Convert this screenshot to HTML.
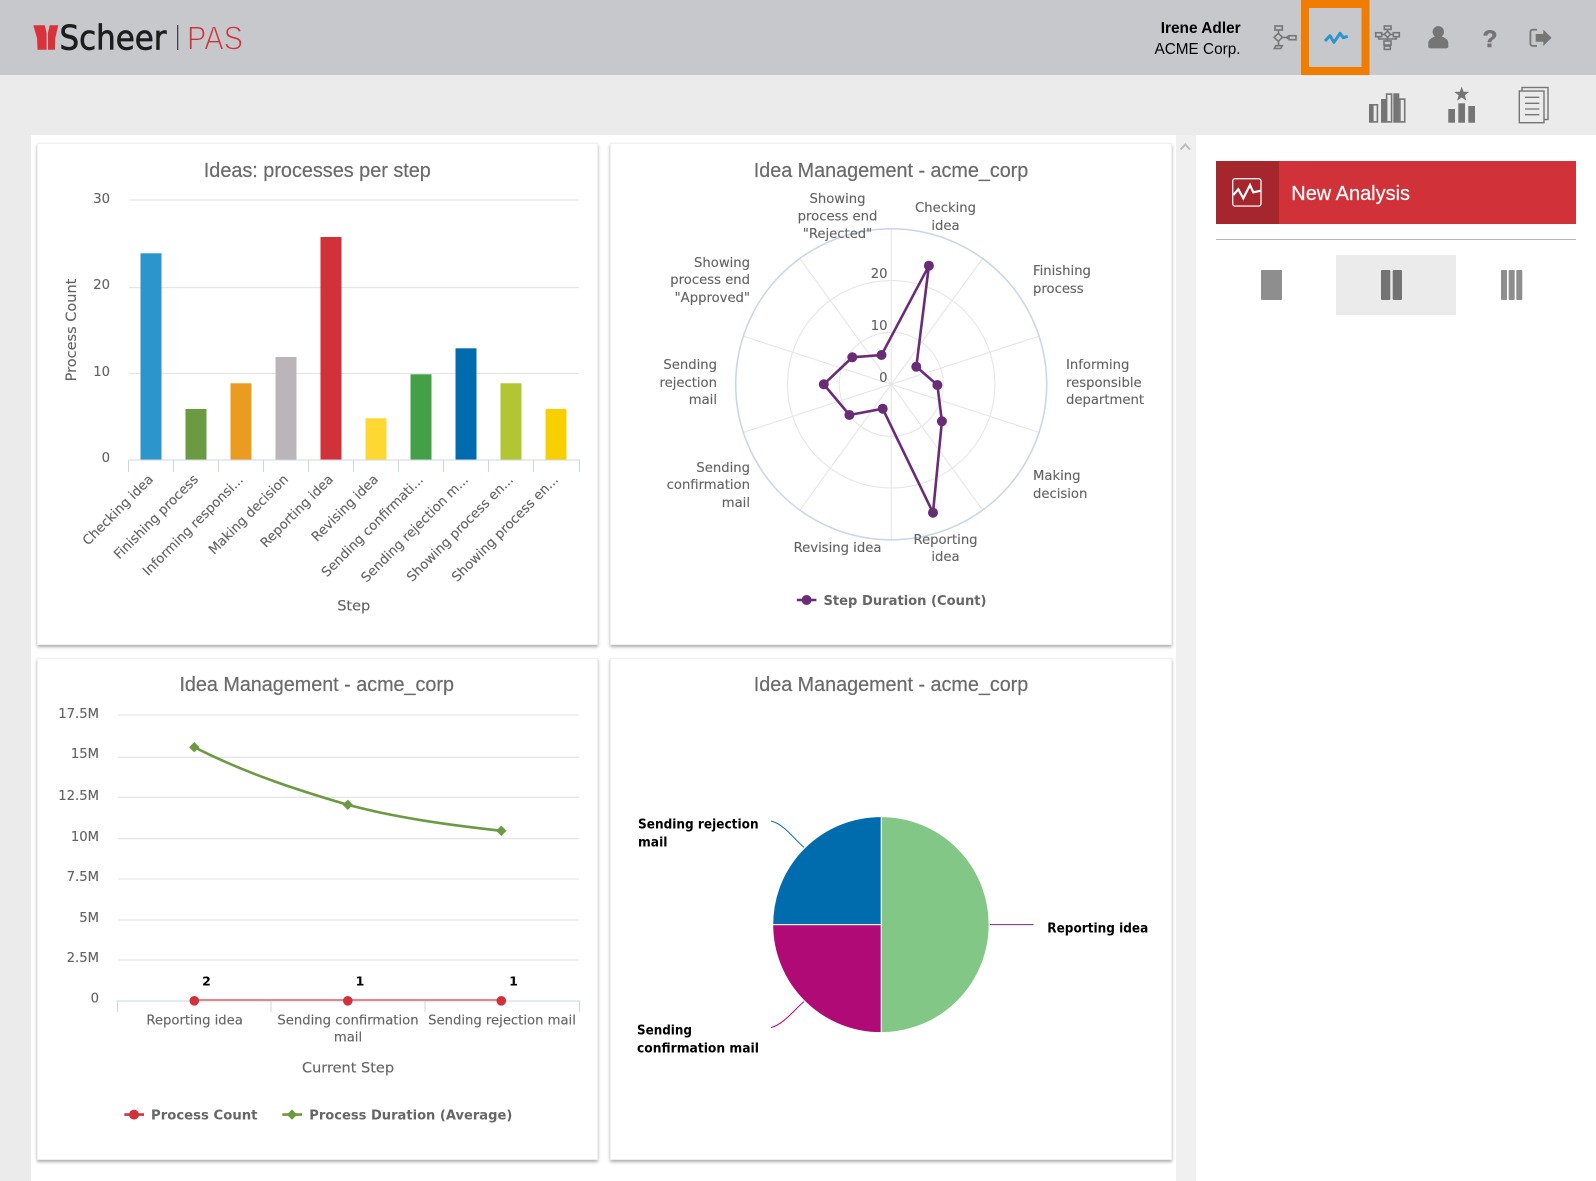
<!DOCTYPE html>
<html lang="en">
<head>
<meta charset="utf-8">
<title>Scheer PAS</title>
<style>
html,body{margin:0;padding:0;background:#ebebeb;width:1596px;height:1181px;overflow:hidden}
.abs{position:absolute}
.card{position:absolute;background:#fff;border:1px solid #f0f0f0;box-sizing:border-box;box-shadow:0 2px 3px rgba(0,0,0,.32)}
svg{position:absolute;left:0;top:0}
.t{font-family:"Liberation Sans",sans-serif;font-size:20px;fill:#6a6a6a;stroke:#6a6a6a;stroke-width:.2;text-anchor:middle}
.a{font-family:"DejaVu Sans",sans-serif;font-size:13.2px;fill:#626262;stroke:#626262;stroke-width:.12}
.at{font-size:14.5px}
.m{text-anchor:middle}
.e{text-anchor:end}
.b{font-family:"DejaVu Sans",sans-serif;font-weight:bold;font-size:13px;fill:#666}
.p{font-family:"DejaVu Sans",sans-serif;font-weight:bold;font-size:13px;fill:#000}
.g{stroke:#e6e6e6;stroke-width:1.3;fill:none}
.x{stroke:#ccd6eb;stroke-width:1;fill:none}
.i{stroke:#757575;stroke-width:1.6;fill:none}
</style>
</head>
<body>
<div class="abs" style="left:0;top:0;width:1596px;height:75px;background:#c6c8cc"></div>
<div class="abs" style="left:31px;top:135px;width:1145px;height:1046px;background:#fff"></div>
<div class="abs" style="left:1176px;top:135px;width:20px;height:1046px;background:#f0f0f0"></div>
<div class="abs" style="left:1196px;top:135px;width:400px;height:1046px;background:#fff"></div>
<div class="card" style="left:37px;top:143px;width:561px;height:502px"></div>
<div class="card" style="left:610px;top:143px;width:562px;height:502px"></div>
<div class="card" style="left:37px;top:658px;width:561px;height:502px"></div>
<div class="card" style="left:610px;top:658px;width:562px;height:502px"></div>

<svg width="1596" height="1181" viewBox="0 0 1596 1181" xmlns="http://www.w3.org/2000/svg">
<!-- logo -->
<polygon fill="#d8333a" points="33.3,25.3 44.8,25.3 46.6,33 46.6,49.7 37.5,49.7 37,38"/>
<polygon fill="#d8333a" points="58.3,25.3 49.7,25.3 47.9,33 47.9,49.7 55,49.7 55.3,38"/>
<text x="59.5" y="49.3" textLength="107" lengthAdjust="spacingAndGlyphs" style="font-family:'DejaVu Sans',sans-serif;font-size:34px;fill:#1d1d1d;stroke:#1d1d1d;stroke-width:.7">Scheer</text>
<rect x="177" y="25" width="1.3" height="25" fill="#444"/>
<text x="187" y="49.5" textLength="56" lengthAdjust="spacingAndGlyphs" style="font-family:'Liberation Sans',sans-serif;font-size:33px;fill:#d13239;stroke:#c6c8cc;stroke-width:1.1">PAS</text>

<!-- user -->
<text x="1240.7" y="33" class="e" textLength="80" lengthAdjust="spacingAndGlyphs" style="font-family:'Liberation Sans',sans-serif;font-weight:bold;font-size:16px;fill:#000">Irene Adler</text>
<text x="1240.5" y="54" class="e" textLength="86" lengthAdjust="spacingAndGlyphs" style="font-family:'Liberation Sans',sans-serif;font-size:16px;fill:#000">ACME Corp.</text>

<!-- orange box -->
<rect x="1305" y="4" width="60.5" height="67" fill="none" stroke="#f07d00" stroke-width="8"/>

<!-- icon 1 -->
<g class="i">
<rect x="1275" y="26" width="7.3" height="4"/>
<path d="M1278.5,30V33.3M1278.3,33.3l4.2,4-4.2,4-4.2-4zM1278.5,41.3V45.7M1282.5,37.5H1289"/>
<rect x="1289" y="35.7" width="7" height="4"/>
<path d="M1275.8,45.7H1282.3L1280.8,48.5H1274.3Z"/>
</g>
<path d="M1285,37.5l3,-2v4z" fill="#757575"/>
<!-- activity -->
<polyline points="1325,41 1330,35.7 1334,42.3 1340,33.3 1343.3,37.7 1347.7,36.3" fill="none" stroke="#2b95cc" stroke-width="3" stroke-linejoin="round"/>
<!-- icon 3 -->
<g class="i">
<rect x="1384.3" y="26" width="6.7" height="3.4"/>
<path d="M1387.5,29.4V31.5M1387.5,31.3l3.2,3-3.2,3-3.2-3zM1381.7,34.5H1384.3M1390.7,34.5H1393.3"/>
<rect x="1375.7" y="32.7" width="6" height="4"/>
<rect x="1393.3" y="32.7" width="6" height="4"/>
<path d="M1378.7,36.7V39H1396.3V36.7M1387.5,37.3V41"/>
<rect x="1384" y="41" width="7" height="4"/>
<rect x="1384.3" y="46" width="6" height="3.4"/>
</g>
<!-- person -->
<circle cx="1438.3" cy="31.8" r="5.7" fill="#757575"/>
<path d="M1428.3,46.5V43C1428.3,39.5 1432,37.5 1435,36.5H1441.6C1444.6,37.5 1448.3,39.5 1448.3,43V46.5C1448.3,47.8 1447,48.4 1446,48.4H1430.6C1429.6,48.4 1428.3,47.8 1428.3,46.5Z" fill="#757575"/>
<!-- question -->
<text x="1490" y="46.8" class="m" style="font-family:'Liberation Sans',sans-serif;font-weight:bold;font-size:24.5px;fill:#757575;stroke:#757575;stroke-width:.6">?</text>
<!-- exit -->
<path d="M1537,29.7H1533C1531.3,29.7 1530.4,30.7 1530.4,32V43.5C1530.4,44.8 1531.3,45.9 1533,45.9H1537" fill="none" stroke="#7a7a7a" stroke-width="1.9"/>
<path d="M1535.7,34H1543.3V29.6L1551.5,37.8L1543.3,46V41.7H1535.7Z" fill="#757575"/>

<!-- toolbar: bars -->
<rect x="1369" y="104" width="3.8" height="18.7" fill="#757575"/>
<rect x="1372.8" y="104.8" width="4.6" height="17.1" fill="none" stroke="#757575" stroke-width="1.6"/>
<rect x="1381" y="99" width="5" height="23.7" fill="#757575"/>
<rect x="1386.6" y="94.1" width="5" height="27.8" fill="none" stroke="#757575" stroke-width="1.6"/>
<rect x="1393.3" y="93.3" width="6" height="29.4" fill="#757575"/>
<rect x="1399.9" y="99.1" width="4.8" height="22.8" fill="none" stroke="#757575" stroke-width="1.6"/>
<!-- star bars -->
<polygon fill="#757575" points="1461.7,86.5 1463.6,91.8 1469.2,91.9 1464.8,95.3 1466.4,100.7 1461.7,97.5 1457,100.7 1458.6,95.3 1454.2,91.9 1459.8,91.8"/>
<rect x="1448.3" y="109" width="6.7" height="13.7" fill="#757575"/>
<rect x="1458.3" y="103.3" width="6.7" height="19.4" fill="#757575"/>
<rect x="1468.3" y="106" width="6.7" height="16.7" fill="#757575"/>
<!-- docs -->
<rect x="1522" y="87.5" width="26" height="32" fill="#ebebeb" stroke="#757575" stroke-width="1.4"/>
<rect x="1519.3" y="91" width="24.7" height="31.7" fill="#ebebeb" stroke="#757575" stroke-width="1.4"/>
<path d="M1525,97.3H1539.3M1525,103.3H1539.3M1525,109H1539.3M1525,114.7H1539.3" stroke="#757575" stroke-width="1.3" fill="none"/>

<!-- scroll chevron -->
<path d="M1180.5,149.5L1185.3,144.5L1190,149.5" fill="none" stroke="#bdbdbd" stroke-width="2"/>

<!-- right panel -->
<rect x="1216" y="161" width="360" height="63" fill="#d13239"/>
<rect x="1216" y="161" width="63" height="63" fill="#a5262c"/>
<rect x="1232.7" y="178.7" width="28.3" height="27.4" rx="2.5" fill="none" stroke="#f5eaea" stroke-width="1.4"/>
<polyline points="1233.3,195 1238.3,189.3 1243.3,198.3 1250,185 1253.3,192.3 1260.7,190.7" fill="none" stroke="#fff" stroke-width="2.2"/>
<text x="1291.3" y="200" textLength="118.7" lengthAdjust="spacingAndGlyphs" style="font-family:'Liberation Sans',sans-serif;font-size:20px;fill:#fff;stroke:#fff;stroke-width:.2">New Analysis</text>
<rect x="1216" y="239" width="360" height="1" fill="#b5b5b5"/>
<rect x="1336" y="255" width="120" height="60" fill="#ebebeb"/>
<rect x="1261" y="270" width="21" height="30" rx="1" fill="#8e8e8e"/>
<rect x="1381" y="270" width="9.3" height="30" rx="1" fill="#737373"/>
<rect x="1392.7" y="270" width="9.3" height="30" rx="1" fill="#737373"/>
<rect x="1501" y="270" width="6" height="30" rx="1" fill="#8e8e8e"/>
<rect x="1508.7" y="270" width="6" height="30" rx="1" fill="#8e8e8e"/>
<rect x="1516.3" y="270" width="6" height="30" rx="1" fill="#8e8e8e"/>

<!-- ===== CARD 1 ===== -->
<text class="t" x="317.3" y="177" textLength="227" lengthAdjust="spacingAndGlyphs">Ideas: processes per step</text>
<path class="g" d="M129,200H579M129,287.5H579M129,373.5H579"/>
<g class="a e">
<text x="110" y="203">30</text>
<text x="110" y="289">20</text>
<text x="110" y="376">10</text>
<text x="110" y="462">0</text>
</g>
<text class="a at m" transform="translate(76,330) rotate(-90)">Process Count</text>
<rect x="140.5" y="253.3" width="21" height="206.4" fill="#2b95cc"/>
<rect x="185.5" y="409" width="21" height="50.7" fill="#6b9a42"/>
<rect x="230.5" y="383.3" width="21" height="76.4" fill="#e99c20"/>
<rect x="275.5" y="357" width="21" height="102.7" fill="#b9b5b8"/>
<rect x="320.5" y="237" width="21" height="222.7" fill="#d13239"/>
<rect x="365.5" y="418.3" width="21" height="41.4" fill="#ffd733"/>
<rect x="410.5" y="374.3" width="21" height="85.4" fill="#44a047"/>
<rect x="455.5" y="348.3" width="21" height="111.4" fill="#006cad"/>
<rect x="500.5" y="383.3" width="21" height="76.4" fill="#b2c532"/>
<rect x="545.5" y="409" width="21" height="50.7" fill="#f8cf00"/>
<path class="x" d="M129,460H580M128.5,460V472M173.5,460V472M218.5,460V472M263.5,460V472M308.5,460V472M353.5,460V472M398.5,460V472M443.5,460V472M488.5,460V472M533.5,460V472M579.5,460V472" stroke-width="1.2"/>
<g class="a e">
<text transform="translate(154,480) rotate(-45)">Checking idea</text>
<text transform="translate(199,480) rotate(-45)">Finishing process</text>
<text transform="translate(244,480.5) rotate(-45)">Informing responsi...</text>
<text transform="translate(289,480) rotate(-45)">Making decision</text>
<text transform="translate(334,480) rotate(-45)">Reporting idea</text>
<text transform="translate(379,480) rotate(-45)">Revising idea</text>
<text transform="translate(424,480.5) rotate(-45)">Sending confirmati...</text>
<text transform="translate(469,480.5) rotate(-45)">Sending rejection m...</text>
<text transform="translate(514,480.5) rotate(-45)">Showing process en...</text>
<text transform="translate(559,480.5) rotate(-45)">Showing process en...</text>
</g>
<text class="a at m" x="353.7" y="610.5">Step</text>

<!-- ===== CARD 2 radar ===== -->
<text class="t" x="891" y="177" textLength="274.5" lengthAdjust="spacingAndGlyphs">Idea Management - acme_corp</text>
<g class="g" style="stroke-width:1.1">
<circle cx="891.2" cy="384.3" r="52"/>
<circle cx="891.2" cy="384.3" r="103.7"/>
<path d="M891.2,384.3V228.8M891.2,384.3L982.6,258.5M891.2,384.3L1039.1,336.2M891.2,384.3L1039.1,432.4M891.2,384.3L982.6,510.1M891.2,384.3V539.8M891.2,384.3L799.8,510.1M891.2,384.3L743.3,432.4M891.2,384.3L743.3,336.2M891.2,384.3L799.8,258.5"/>
</g>
<circle cx="891.2" cy="384.3" r="155.5" fill="none" stroke="#ccd6eb" stroke-width="1.6"/>
<g class="a e">
<text x="887.5" y="278">20</text>
<text x="887.5" y="330">10</text>
<text x="887.5" y="382">0</text>
</g>
<polygon points="928.9,265.7 916.3,366.7 937.4,385 941.9,421.3 933,512.7 882.7,408.7 849.4,415 823.8,384.3 852.3,357.3 881.5,355" fill="none" stroke="#692c77" stroke-width="2.6"/>
<g fill="#692c77">
<circle cx="928.9" cy="265.7" r="5"/><circle cx="916.3" cy="366.7" r="5"/><circle cx="937.4" cy="385" r="5"/><circle cx="941.9" cy="421.3" r="5"/><circle cx="933" cy="512.7" r="5"/><circle cx="882.7" cy="408.7" r="5"/><circle cx="849.4" cy="415" r="5"/><circle cx="823.8" cy="384.3" r="5"/><circle cx="852.3" cy="357.3" r="5"/><circle cx="881.5" cy="355" r="5"/>
</g>
<g class="a m">
<text x="945.5" y="212">Checking</text><text x="945.5" y="230">idea</text>
<text x="837.5" y="203">Showing</text><text x="837.5" y="220.5">process end</text><text x="837.5" y="238">"Rejected"</text>
<text x="945.5" y="544">Reporting</text><text x="945.5" y="561">idea</text>
<text x="837.5" y="552">Revising idea</text>
</g>
<g class="a">
<text x="1033" y="275">Finishing</text><text x="1033" y="293">process</text>
<text x="1066" y="369">Informing</text><text x="1066" y="387">responsible</text><text x="1066" y="404">department</text>
<text x="1033" y="480">Making</text><text x="1033" y="498">decision</text>
</g>
<g class="a e">
<text x="750" y="472">Sending</text><text x="750" y="489">confirmation</text><text x="750" y="507">mail</text>
<text x="717" y="369">Sending</text><text x="717" y="387">rejection</text><text x="717" y="404">mail</text>
<text x="750" y="267">Showing</text><text x="750" y="284">process end</text><text x="750" y="302">"Approved"</text>
</g>
<path d="M796.8,600H816.4" stroke="#692c77" stroke-width="2.6"/>
<circle cx="806.6" cy="600" r="5" fill="#692c77"/>
<text class="b" x="823.5" y="604.8" textLength="163" lengthAdjust="spacingAndGlyphs">Step Duration (Count)</text>

<!-- ===== CARD 3 line ===== -->
<text class="t" x="316.7" y="691" textLength="274.5" lengthAdjust="spacingAndGlyphs">Idea Management - acme_corp</text>
<path class="g" d="M118,715H579M118,757.3H579M118,797.3H579M118,838.6H579M118,879H579M118,920H579M118,960H579"/>
<g class="a e">
<text x="99" y="718">17.5M</text>
<text x="99" y="758">15M</text>
<text x="99" y="800">12.5M</text>
<text x="99" y="841">10M</text>
<text x="99" y="881">7.5M</text>
<text x="99" y="922">5M</text>
<text x="99" y="962">2.5M</text>
<text x="99" y="1002.5">0</text>
</g>
<path class="x" d="M117,1001H580M117.5,1001V1012M271,1001V1012M425,1001V1012M579.5,1001V1012" stroke-width="1.2"/>
<path d="M194.3,747.2C245,773 297,790 347.8,804.8C397,818 449,825 501.3,830.8" fill="none" stroke="#6b9a42" stroke-width="2.6"/>
<path d="M194.3,1000H501.3" stroke="#e4868a" stroke-width="2"/>
<g fill="#6b9a42">
<polygon points="194.3,742 199.5,747.2 194.3,752.4 189.1,747.2"/>
<polygon points="347.8,799.6 353,804.8 347.8,810 342.6,804.8"/>
<polygon points="501.3,825.6 506.5,830.8 501.3,836 496.1,830.8"/>
</g>
<g fill="#d13239">
<circle cx="194.3" cy="1000.8" r="4.8"/><circle cx="347.8" cy="1000.8" r="4.8"/><circle cx="501.3" cy="1000.8" r="4.8"/>
</g>
<g class="p m" style="font-size:12.5px">
<text x="206.5" y="985.5">2</text><text x="360" y="985.5">1</text><text x="513.5" y="985.5">1</text>
</g>
<g class="a m">
<text x="194.6" y="1024.5">Reporting idea</text>
<text x="348" y="1024.5">Sending confirmation</text>
<text x="348" y="1041.5">mail</text>
<text x="502" y="1024.5">Sending rejection mail</text>
<text class="at" x="348" y="1072.5">Current Step</text>
</g>
<path d="M124.3,1114.6H144" stroke="#d13239" stroke-width="2.6"/>
<circle cx="134" cy="1114.6" r="5" fill="#d13239"/>
<text class="b" x="151" y="1119.4" textLength="106.5" lengthAdjust="spacingAndGlyphs">Process Count</text>
<path d="M282.3,1114.6H302" stroke="#6b9a42" stroke-width="2.6"/>
<polygon points="292,1109.4 297.2,1114.6 292,1119.8 286.8,1114.6" fill="#6b9a42"/>
<text class="b" x="309.3" y="1119.4" textLength="203" lengthAdjust="spacingAndGlyphs">Process Duration (Average)</text>

<!-- ===== CARD 4 pie ===== -->
<text class="t" x="891" y="691" textLength="274.5" lengthAdjust="spacingAndGlyphs">Idea Management - acme_corp</text>
<path d="M881.2,816.6A108,108 0 0 1 881.2,1032.6Z" fill="#82c785" stroke="#fff" stroke-width="1"/>
<path d="M881.2,924.6V1032.6A108,108 0 0 1 772.7,924.6Z" fill="#b00a76" stroke="#fff" stroke-width="1"/>
<path d="M881.2,924.6H772.7A108,108 0 0 1 881.2,816.6Z" fill="#006cad" stroke="#fff" stroke-width="1"/>
<path d="M771,821C784,824 794,839 804,847.4" fill="none" stroke="#006cad" stroke-width="1"/>
<path d="M771,1027.6C784,1024 794,1010 804,1001.5" fill="none" stroke="#b00a76" stroke-width="1"/>
<path d="M990,924.6H1033.6" stroke="#692c77" stroke-width="1"/>
<text class="p" x="638" y="828.5" textLength="120.6" lengthAdjust="spacingAndGlyphs">Sending rejection</text>
<text class="p" x="638" y="846.5" textLength="29.5" lengthAdjust="spacingAndGlyphs">mail</text>
<text class="p" x="1047.3" y="932.5" textLength="101" lengthAdjust="spacingAndGlyphs">Reporting idea</text>
<text class="p" x="637" y="1034.5" textLength="55" lengthAdjust="spacingAndGlyphs">Sending</text>
<text class="p" x="637" y="1052.5" textLength="122" lengthAdjust="spacingAndGlyphs">confirmation mail</text>
</svg>
</body>
</html>
